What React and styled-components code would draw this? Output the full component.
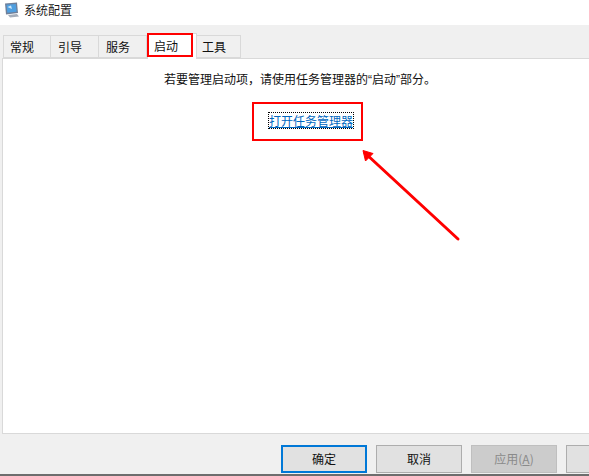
import React from 'react';
import styled, { createGlobalStyle } from 'styled-components';

const GlobalStyle = createGlobalStyle`
  html, body {
    margin: 0;
    padding: 0;
    background: #f0f0f0;
  }
  body {
    font-family: "Noto Sans CJK SC", "Liberation Sans", sans-serif;
    overflow: hidden;
  }
`;

const Window = styled.div`
  position: relative;
  width: 589px;
  height: 476px;
  display: flex;
  flex-direction: column;
  background: #f0f0f0;
  border-bottom: 2px solid #6d6d6d;
  box-sizing: border-box;
  overflow: hidden;
`;

const TitleBar = styled.div`
  box-sizing: border-box;
  height: 25px;
  flex: none;
  display: flex;
  align-items: flex-start;
  gap: 4px;
  padding: 2px 0 0 4px;
  background: #fff;
  font-size: 12px;
  line-height: 16px;
  color: #1a1a1a;
`;

const Tabs = styled.div`
  height: 33px;
  flex: none;
  display: flex;
  align-items: flex-end;
  padding-left: 3px;
  position: relative;
  z-index: 1;
`;

const Tab = styled.div`
  box-sizing: border-box;
  width: ${p => p.$w}px;
  height: ${p => (p.$active ? 26 : 23)}px;
  margin-bottom: ${p => (p.$active ? -1 : 0)}px;
  padding: ${p => (p.$active ? 3 : 2)}px 0 0 ${p => p.$pad}px;
  font-size: 12px;
  line-height: 18px;
  color: #111;
  background: ${p => (p.$active ? '#fff' : '#f0f0f0')};
  border: 1px solid #d9d9d9;
  border-left-width: ${p => (p.$first || p.$active ? 1 : 0)}px;
  border-bottom-width: ${p => (p.$active ? 0 : 1)}px;
`;

const Panel = styled.div`
  flex: none;
  box-sizing: border-box;
  height: 376px;
  margin-left: 2px;
  background: #fff;
  border: 1px solid #d9d9d9;
  border-right: 0;
  display: flex;
  flex-direction: column;
  align-items: flex-start;
  padding-top: 10px;
`;

const Message = styled.div`
  margin-left: 161px;
  font-size: 12px;
  line-height: 20px;
  color: #111;
`;

const Quote = styled.span`
  font-family: "Liberation Sans", sans-serif;
`;

const TaskLink = styled.a`
  margin: 23px 0 0 266px;
  font-size: 12px;
  line-height: 15px;
  color: #0067c0;
  text-decoration: underline;
  outline: 1px dotted #000;
`;

const Footer = styled.div`
  flex: 1;
  display: flex;
  gap: 9px;
  padding: 11px 0 0 281px;
`;

const Button = styled.div`
  flex: none;
  box-sizing: border-box;
  width: 86px;
  height: 28px;
  padding-bottom: 2px;
  display: flex;
  align-items: center;
  justify-content: center;
  font-size: 12px;
  color: ${p => (p.$disabled ? '#8a8a8a' : '#111')};
  background: ${p => (p.$disabled ? '#cccccc' : '#e1e1e1')};
  border: ${p => (p.$primary ? '2px' : '1px')} solid
    ${p => (p.$disabled ? '#bfbfbf' : p.$primary ? '#0078d7' : '#adadad')};
`;

const AccessKey = styled.span`
  text-decoration: underline;
`;

const Highlight = styled.div`
  position: absolute;
  z-index: 2;
  box-sizing: border-box;
  left: ${p => p.$x}px;
  top: ${p => p.$y}px;
  width: ${p => p.$w}px;
  height: ${p => p.$h}px;
  border: 2px solid #ff0000;
  pointer-events: none;
`;

const Arrow = styled.svg`
  position: absolute;
  z-index: 2;
  left: 355px;
  top: 145px;
`;

const AppIcon = () => (
  <svg width="16" height="16" viewBox="0 0 16 16">
    <path d="M1 1.5 L13 0.5 L14 11 L2 12.5 Z" fill="#6f7f99" />
    <path d="M2.5 2.8 L11.8 2 L12.6 9.8 L3.3 10.8 Z" fill="#4f9fe0" />
    <path d="M3.5 5 L7 3.5 L8 7 Z" fill="#cfe8fa" />
    <path d="M4 13 L13 12 L15 14.5 L6 15.5 Z" fill="#a4adba" />
  </svg>
);

const tabs = [
  { label: '常规', w: 48, pad: 6, first: true },
  { label: '引导', w: 48, pad: 7 },
  { label: '服务', w: 48, pad: 7 },
  { label: '启动', w: 50, pad: 6, active: true },
  { label: '工具', w: 44, pad: 5 },
];

const App = () => (
  <Window>
    <GlobalStyle />
    <TitleBar>
      <AppIcon />
      <span>系统配置</span>
    </TitleBar>
    <Tabs>
      {tabs.map(t => (
        <Tab key={t.label} $w={t.w} $pad={t.pad} $first={t.first} $active={t.active}>
          {t.label}
        </Tab>
      ))}
    </Tabs>
    <Panel>
      <Message>
        若要管理启动项，请使用任务管理器的<Quote>“</Quote>启动<Quote>”</Quote>部分。
      </Message>
      <TaskLink>打开任务管理器</TaskLink>
    </Panel>
    <Footer>
      <Button $primary>确定</Button>
      <Button>取消</Button>
      <Button $disabled>
        应用(<AccessKey>A</AccessKey>)
      </Button>
      <Button />
    </Footer>
    <Highlight $x={147} $y={33} $w={46} $h={24} />
    <Highlight $x={252} $y={102} $w={111} $h={39} />
    <Arrow width="110" height="100" viewBox="0 0 110 100">
      <path d="M10 8 L103 94" stroke="#ff0000" strokeWidth="3" strokeLinecap="round" />
      <path d="M8 5.5 L18 8.5 L10.5 16 Z" fill="#ff0000" stroke="#ff0000" strokeWidth="1" />
    </Arrow>
  </Window>
);

export default App;
